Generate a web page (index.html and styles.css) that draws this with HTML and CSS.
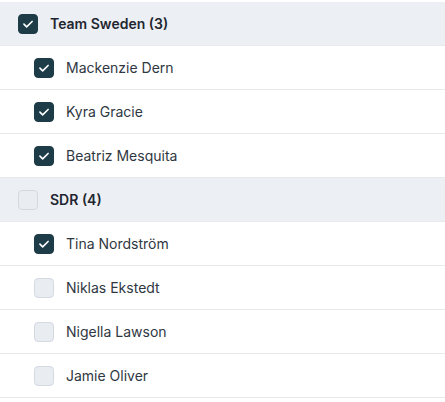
FILE: index.html
```html
<!DOCTYPE html>
<html>
<head>
<meta charset="utf-8">
<link rel="stylesheet" href="styles.css">
</head>
<body>
<div class="list">
  <div class="row group">
    <span class="box checked"><svg viewBox="0 0 20 20"><path d="M5.5 10.2l3 3L14.6 7.2"/></svg></span>
    <span class="label">Team Sweden (3)</span>
  </div>
  <div class="row item">
    <span class="box checked"><svg viewBox="0 0 20 20"><path d="M5.5 10.2l3 3L14.6 7.2"/></svg></span>
    <span class="label">Mackenzie Dern</span>
  </div>
  <div class="row item">
    <span class="box checked"><svg viewBox="0 0 20 20"><path d="M5.5 10.2l3 3L14.6 7.2"/></svg></span>
    <span class="label">Kyra Gracie</span>
  </div>
  <div class="row item">
    <span class="box checked"><svg viewBox="0 0 20 20"><path d="M5.5 10.2l3 3L14.6 7.2"/></svg></span>
    <span class="label">Beatriz Mesquita</span>
  </div>
  <div class="row group">
    <span class="box"></span>
    <span class="label">SDR (4)</span>
  </div>
  <div class="row item">
    <span class="box checked"><svg viewBox="0 0 20 20"><path d="M5.5 10.2l3 3L14.6 7.2"/></svg></span>
    <span class="label">Tina Nordström</span>
  </div>
  <div class="row item">
    <span class="box"></span>
    <span class="label">Niklas Ekstedt</span>
  </div>
  <div class="row item">
    <span class="box"></span>
    <span class="label">Nigella Lawson</span>
  </div>
  <div class="row item">
    <span class="box"></span>
    <span class="label">Jamie Oliver</span>
  </div>
</div>
</body>
</html>
```
FILE: styles.css
```css
html, body {
  margin: 0;
  background: #ffffff;
}
body {
  padding-top: 2px;
  font-family: Inter, "Noto Sans", sans-serif;
  font-size: 14px;
  color: #2f3742;
}
.list {
  display: flex;
  flex-direction: column;
}
.row {
  display: flex;
  align-items: center;
  height: 43px;
  border-bottom: 1px solid #e6e8ec;
  gap: 12px;
}
.group {
  background: #eceff3;
  padding-left: 18px;
}
.group .label {
  font-weight: 600;
  color: #1f2630;
}
.item {
  padding-left: 34px;
}
.box {
  width: 20px;
  height: 20px;
  box-sizing: border-box;
  border-radius: 4px;
  border: 1px solid #d4d9e0;
  background: #e9edf2;
  display: flex;
  align-items: center;
  justify-content: center;
  flex: none;
}
.box.checked {
  background: #1e3c48;
  border-color: #1e3c48;
}
.box svg {
  width: 20px;
  height: 20px;
  fill: none;
  stroke: #ffffff;
  stroke-width: 1.8;
  stroke-linecap: round;
  stroke-linejoin: round;
}
```
